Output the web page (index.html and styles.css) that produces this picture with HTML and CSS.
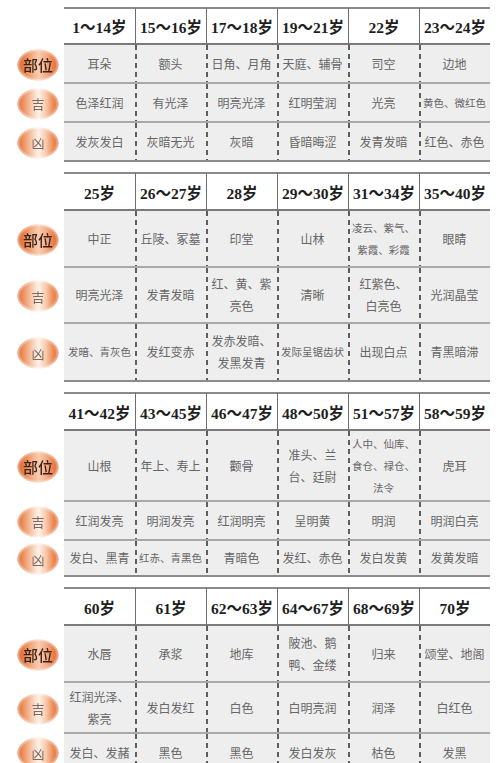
FILE: index.html
```html
<!DOCTYPE html>
<html lang="zh">
<head>
<meta charset="utf-8">
<title>流年气色表</title>
<link rel="stylesheet" href="styles.css">
</head>
<body>
<div class="page">

  <div class="block b1">
    <div class="corner"></div>
    <div class="hd">1～14岁</div><div class="hd">15～16岁</div><div class="hd">17～18岁</div><div class="hd">19～21岁</div><div class="hd">22岁</div><div class="hd">23～24岁</div>
    <div class="lab"><span class="badge pos">部位</span></div>
    <div class="c">耳朵</div><div class="c">额头</div><div class="c">日角、月角</div><div class="c">天庭、辅骨</div><div class="c">司空</div><div class="c">边地</div>
    <div class="lab"><span class="badge">吉</span></div>
    <div class="c">色泽红润</div><div class="c">有光泽</div><div class="c">明亮光泽</div><div class="c">红明莹润</div><div class="c">光亮</div><div class="c sm">黄色、微红色</div>
    <div class="lab"><span class="badge">凶</span></div>
    <div class="c">发灰发白</div><div class="c">灰暗无光</div><div class="c">灰暗</div><div class="c">昏暗晦涩</div><div class="c">发青发暗</div><div class="c">红色、赤色</div>
  </div>

  <div class="block b2">
    <div class="corner"></div>
    <div class="hd">25岁</div><div class="hd">26～27岁</div><div class="hd">28岁</div><div class="hd">29～30岁</div><div class="hd">31～34岁</div><div class="hd">35～40岁</div>
    <div class="lab"><span class="badge pos">部位</span></div>
    <div class="c">中正</div><div class="c">丘陵、冢墓</div><div class="c">印堂</div><div class="c">山林</div><div class="c sm">凌云、紫气、<br>紫霞、彩霞</div><div class="c">眼睛</div>
    <div class="lab"><span class="badge">吉</span></div>
    <div class="c">明亮光泽</div><div class="c">发青发暗</div><div class="c">红、黄、紫<br>亮色</div><div class="c">清晰</div><div class="c">红紫色、<br>白亮色</div><div class="c">光润晶莹</div>
    <div class="lab"><span class="badge">凶</span></div>
    <div class="c sm">发暗、青灰色</div><div class="c">发红变赤</div><div class="c">发赤发暗、<br>发黑发青</div><div class="c sm">发际呈锯齿状</div><div class="c">出现白点</div><div class="c">青黑暗滞</div>
  </div>

  <div class="block b3">
    <div class="corner"></div>
    <div class="hd">41～42岁</div><div class="hd">43～45岁</div><div class="hd">46～47岁</div><div class="hd">48～50岁</div><div class="hd">51～57岁</div><div class="hd">58～59岁</div>
    <div class="lab"><span class="badge pos">部位</span></div>
    <div class="c">山根</div><div class="c">年上、寿上</div><div class="c">颧骨</div><div class="c">准头、兰<br>台、廷尉</div><div class="c sm">人中、仙库、<br>食仓、禄仓、<br>法令</div><div class="c">虎耳</div>
    <div class="lab"><span class="badge">吉</span></div>
    <div class="c">红润发亮</div><div class="c">明润发亮</div><div class="c">红润明亮</div><div class="c">呈明黄</div><div class="c">明润</div><div class="c">明润白亮</div>
    <div class="lab"><span class="badge">凶</span></div>
    <div class="c">发白、黑青</div><div class="c sm">红赤、青黑色</div><div class="c">青暗色</div><div class="c">发红、赤色</div><div class="c">发白发黄</div><div class="c">发黄发暗</div>
  </div>

  <div class="block b4">
    <div class="corner"></div>
    <div class="hd">60岁</div><div class="hd">61岁</div><div class="hd">62～63岁</div><div class="hd">64～67岁</div><div class="hd">68～69岁</div><div class="hd">70岁</div>
    <div class="lab"><span class="badge pos">部位</span></div>
    <div class="c">水唇</div><div class="c">承浆</div><div class="c">地库</div><div class="c">陂池、鹅<br>鸭、金缕</div><div class="c">归来</div><div class="c">颂堂、地阁</div>
    <div class="lab"><span class="badge">吉</span></div>
    <div class="c">红润光泽、<br>紫亮</div><div class="c">发白发红</div><div class="c">白色</div><div class="c">白明亮润</div><div class="c">润泽</div><div class="c">白红色</div>
    <div class="lab"><span class="badge">凶</span></div>
    <div class="c">发白、发赭</div><div class="c">黑色</div><div class="c">黑色</div><div class="c">发白发灰</div><div class="c">枯色</div><div class="c">发黑</div>
  </div>

</div>
</body>
</html>
```

FILE: styles.css
```css
html, body {
  margin: 0;
  padding: 0;
  background: #ffffff;
}

body {
  font-family: "Noto Sans CJK SC", "Noto Sans", sans-serif;
  overflow: hidden;
}

.page {
  display: flex;
  flex-direction: column;
  gap: 10px;
  padding-top: 7px;
}

.block {
  display: grid;
  grid-template-columns: 64px repeat(6, 71px);
}

.b1 { grid-template-rows: 38px 39px 39px 39px; }
.b2 { grid-template-rows: 39px 57px 56px 58px; }
.b3 { grid-template-rows: 39px 71px 39px 36px; }
.b4 { grid-template-rows: 39px 57px 51px 38px; }

.corner {
  background: #ffffff;
}

.hd {
  box-sizing: border-box;
  background: #ffffff;
  border-top: 2px solid #8a8a8a;
  border-bottom: 2px solid #7a7a7a;
  display: flex;
  align-items: center;
  justify-content: center;
  white-space: nowrap;
  font-family: "Liberation Serif", "Noto Sans CJK SC", serif;
  font-weight: bold;
  font-size: 15.5px;
  color: #1f1f1f;
}

.hd + .hd {
  border-left: 1px solid #6e6e6e;
}

.lab {
  background: #ffffff;
  display: flex;
  align-items: center;
  justify-content: flex-end;
  padding-right: 5px;
}

.badge {
  width: 42px;
  height: 32px;
  border-radius: 50%;
  display: flex;
  align-items: center;
  justify-content: center;
  font-size: 13px;
  color: #7a6a62;
  background: linear-gradient(to right, #df612a 0%, #ee9764 17%, #fadcc8 42%, #fdf1e8 52%, #f6c6a6 70%, #ec8b58 86%, #e2672f 100%);
  -webkit-mask-image: radial-gradient(ellipse closest-side, #000 82%, rgba(0,0,0,0.35) 100%);
  mask-image: radial-gradient(ellipse closest-side, #000 82%, rgba(0,0,0,0.35) 100%);
}

.badge.pos {
  font-size: 15px;
  font-weight: 500;
  color: #3a2219;
  background: linear-gradient(to right, #dc5a22 0%, #ea8550 18%, #f5bb97 42%, #f8cdb1 52%, #f2a980 72%, #e87a44 88%, #df6029 100%);
}

.c {
  box-sizing: border-box;
  background: #eeeeee;
  border-bottom: 2px solid #a8a8a8;
  display: flex;
  align-items: center;
  justify-content: center;
  text-align: center;
  white-space: nowrap;
  font-size: 12px;
  line-height: 22px;
  color: #666666;
}

.c + .c {
  background:
    repeating-linear-gradient(to bottom, #5e5e5e 0 5px, transparent 5px 9px) left top / 2px 100% no-repeat,
    #eeeeee;
}

.block > .c:nth-last-child(-n+6) {
  border-bottom: 2px solid #8c8c8c;
}

.b4 > .c:nth-last-child(-n+6) {
  border-bottom: none;
}

.c.sm {
  font-size: 10.5px;
}
```
